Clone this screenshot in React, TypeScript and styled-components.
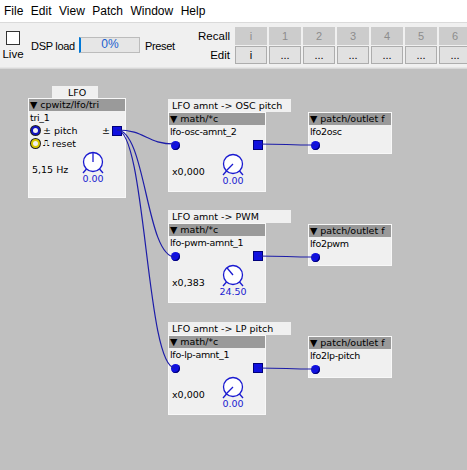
import React from 'react';
import styled, {createGlobalStyle} from 'styled-components';

const GlobalStyle = createGlobalStyle`
  html, body {
    margin: 0;
    padding: 0;
    background: #c0c0c0;
  }
  body {
    font-family: "Liberation Sans", Arial, sans-serif;
    width: 467px;
    height: 470px;
    overflow: hidden;
  }
`;

const menuItems = ['File', 'Edit', 'View', 'Patch', 'Window', 'Help'];
const presets = ['i', '1', '2', '3', '4', '5', '6'];

const Knob = ({angle}: {angle: number}) => {
  const r = 9.5;
  const cx = 11;
  const cy = 11;
  const rad = (angle * Math.PI) / 180;
  const ex = cx + Math.sin(rad) * r;
  const ey = cy - Math.cos(rad) * r;
  return (
    <svg width="22" height="24" viewBox="0 0 22 24">
      <circle cx={cx} cy={cy} r={r} fill="#fff" stroke="#1a1ad0" strokeWidth="1.3"/>
      <line x1={cx} y1={cy} x2={ex} y2={ey} stroke="#1a1ad0" strokeWidth="1.3"/>
      <line x1="4.5" y1="18" x2="1" y2="22" stroke="#1a1ad0" strokeWidth="1.3"/>
      <line x1="17.5" y1="18" x2="21" y2="22" stroke="#1a1ad0" strokeWidth="1.3"/>
    </svg>
  );
};

type MathProps = {top: number; label: string; name: string; factor: string; value: string; angle: number};

const MathBlock = ({top, label, name, factor, value, angle}: MathProps) => (
  <>
    <Comment style={{left: 168, top, width: 123}}>{label}</Comment>
    <Node style={{left: 168, top: top + 13, width: 98, height: 80}}>
      <NodeHeader>▼ math/*c</NodeHeader>
      <NodeName>{name}</NodeName>
      <PortRow>
        <Inlet/>
        <Outlet/>
      </PortRow>
      <ParamRow>
        <ParamText>{factor}</ParamText>
        <KnobWrap>
          <Knob angle={angle}/>
          <KnobValue>{value}</KnobValue>
        </KnobWrap>
      </ParamRow>
    </Node>
  </>
);

const OutletBlock = ({top, name}: {top: number; name: string}) => (
  <Node style={{left: 308, top, width: 84, height: 42}}>
    <NodeHeader>▼ patch/outlet f</NodeHeader>
    <NodeName>{name}</NodeName>
    <PortRow>
      <Inlet/>
    </PortRow>
  </Node>
);

const wire = (x1: number, y1: number, x2: number, y2: number) => {
  const dx = Math.max(20, Math.abs(x2 - x1) * 0.5);
  return `M${x1} ${y1} C${x1 + dx} ${y1} ${x2 - dx} ${y2} ${x2} ${y2}`;
};

const App = () => {
  return (
    <>
      <GlobalStyle/>
      <Window>
        <MenuBar>
          {menuItems.map((m) => (
            <MenuItem key={m}>{m}</MenuItem>
          ))}
        </MenuBar>
        <Toolbar>
          <LiveBox>
            <CheckBox/>
            <span>Live</span>
          </LiveBox>
          <ToolLabel $gap={6}>DSP load</ToolLabel>
          <DspBar>0%</DspBar>
          <ToolLabel $gap={5}>Preset</ToolLabel>
          <PresetGrid>
            <RowLabel>Recall</RowLabel>
            {presets.map((p) => (
              <PresetButton key={'r' + p} disabled>{p}</PresetButton>
            ))}
            <RowLabel>Edit</RowLabel>
            {presets.map((p) => (
              <PresetButton key={'e' + p}>{p === 'i' ? 'i' : '...'}</PresetButton>
            ))}
          </PresetGrid>
        </Toolbar>
        <Canvas>
          <Wires width="467" height="403">
            <path d={wire(117, 61, 175, 75)}/>
            <path d={wire(117, 61, 175, 188)}/>
            <path d={wire(117, 61, 175, 299)}/>
            <path d={wire(258, 75, 315, 76)}/>
            <path d={wire(258, 187, 315, 188)}/>
            <path d={wire(258, 299, 315, 300)}/>
          </Wires>

          <Comment style={{left: 52, top: 17, width: 46, textAlign: 'center'}}>LFO</Comment>
          <Node style={{left: 28, top: 29, width: 98, height: 100}}>
            <NodeHeader>▼ cpwitz/lfo/tri</NodeHeader>
            <NodeName>tri_1</NodeName>
            <LfoRow>
              <LfoInlet $yellow={false}/>
              <span>± pitch</span>
              <LfoOut>± <Outlet/></LfoOut>
            </LfoRow>
            <LfoRow>
              <LfoInlet $yellow/>
              <StepGlyph>⎍</StepGlyph>
              <span>reset</span>
            </LfoRow>
            <ParamRow $right={19}>
              <ParamText>5,15 Hz</ParamText>
              <KnobWrap>
                <Knob angle={0}/>
                <KnobValue>0.00</KnobValue>
              </KnobWrap>
            </ParamRow>
          </Node>

          <MathBlock top={30} label="LFO amnt -> OSC pitch" name="lfo-osc-amnt_2" factor="x0,000" value="0.00" angle={-135}/>
          <MathBlock top={141} label="LFO amnt -> PWM" name="lfo-pwm-amnt_1" factor="x0,383" value="24.50" angle={-40}/>
          <MathBlock top={253} label="LFO amnt -> LP pitch" name="lfo-lp-amnt_1" factor="x0,000" value="0.00" angle={-135}/>

          <OutletBlock top={43} name="lfo2osc"/>
          <OutletBlock top={155} name="lfo2pwm"/>
          <OutletBlock top={267} name="lfo2lp-pitch"/>
        </Canvas>
      </Window>
    </>
  );
};

export default App;

const Window = styled.div`
  width: 467px;
  height: 470px;
  display: flex;
  flex-direction: column;
`;
const MenuBar = styled.div`
  height: 22px;
  background: #fff;
  display: flex;
  align-items: center;
  padding-left: 4px;
  gap: 7.5px;
  font-size: 12px;
  color: #000;
`;
const MenuItem = styled.span`
  line-height: 22px;
`;
const Toolbar = styled.div`
  height: 44px;
  background: #f0f0f0;
  border-top: 1px solid #dadada;
  border-bottom: 1px solid #e6e6e6;
  display: flex;
  align-items: center;
  font-size: 11px;
  color: #000;
  overflow: hidden;
`;
const LiveBox = styled.div`
  display: flex;
  flex-direction: column;
  align-items: center;
  width: 24px;
  margin-left: 1px;
  gap: 3px;
  flex-shrink: 0;
  font-size: 11.5px;
`;
const CheckBox = styled.div`
  width: 12px;
  height: 12px;
  border: 1px solid #333;
  background: #fff;
`;
const ToolLabel = styled.span<{$gap: number}>`
  margin-left: ${p => p.$gap}px;
  padding-top: 2px;
  font-size: 11px;
  letter-spacing: -0.3px;
  white-space: nowrap;
  flex-shrink: 0;
`;
const DspBar = styled.div`
  margin-left: 4px;
  width: 58px;
  height: 14px;
  flex-shrink: 0;
  background: #e6e6e6;
  border: 1px solid #bcbcbc;
  border-left: 2px solid #0078d7;
  color: #1a5fd0;
  font-size: 12px;
  line-height: 12px;
  text-align: center;
`;
const PresetGrid = styled.div`
  margin-left: auto;
  margin-right: -4px;
  flex-shrink: 0;
  display: grid;
  grid-template-columns: 58px repeat(7, 32px);
  grid-template-rows: 18px 18px;
  column-gap: 2px;
  row-gap: 1px;
  font-size: 11.5px;
`;
const RowLabel = styled.span`
  text-align: right;
  padding-right: 3px;
  line-height: 18px;
`;
const PresetButton = styled.div<{disabled?: boolean}>`
  box-sizing: border-box;
  border: 1px solid ${p => (p.disabled ? '#cccccc' : '#adadad')};
  background: ${p => (p.disabled ? '#cccccc' : '#e1e1e1')};
  color: ${p => (p.disabled ? '#8c8c8c' : '#000')};
  font-size: 11px;
  text-align: center;
  line-height: 16px;
`;
const Canvas = styled.div`
  position: relative;
  flex: 1;
  background: #c0c0c0;
  border-top: 1px solid #d8d8d8;
`;
const Wires = styled.svg`
  position: absolute;
  left: 0;
  top: 0;
  pointer-events: none;
  z-index: 2;
  path {
    fill: none;
    stroke: #1c1ca8;
    stroke-width: 1.2;
  }
`;
const Comment = styled.div`
  position: absolute;
  box-sizing: border-box;
  height: 13px;
  background: #f0f0f0;
  font-family: "DejaVu Sans", Verdana, sans-serif;
  font-size: 9.5px;
  line-height: 13px;
  padding-left: 4px;
  color: #000;
  white-space: nowrap;
`;
const Node = styled.div`
  position: absolute;
  box-sizing: border-box;
  background: #f0f0f0;
  border: 1px solid #f8f8f8;
  display: flex;
  flex-direction: column;
  font-family: "DejaVu Sans", Verdana, sans-serif;
  font-size: 9.5px;
  color: #000;
`;
const NodeHeader = styled.div`
  height: 12px;
  line-height: 12px;
  background: #9a9a9a;
  padding-left: 1px;
  white-space: nowrap;
  overflow: hidden;
`;
const NodeName = styled.div`
  height: 13px;
  line-height: 14px;
  padding-left: 1px;
  white-space: nowrap;
  letter-spacing: -0.3px;
`;
const PortRow = styled.div`
  height: 14px;
  display: flex;
  align-items: center;
  justify-content: space-between;
  padding: 0 2px 0 2px;
`;
const Inlet = styled.div`
  width: 9px;
  height: 9px;
  border-radius: 50%;
  background: #1010e0;
  box-shadow: inset -1px -1px 0 #00007a;
`;
const Outlet = styled.div`
  display: inline-block;
  width: 8px;
  height: 8px;
  background: #1010e0;
  border: 1px solid #00007a;
`;
const ParamRow = styled.div<{$right?: number}>`
  display: flex;
  align-items: center;
  justify-content: space-between;
  padding: 1px ${p => p.$right ?? 19}px 0 3px;
`;
const ParamText = styled.span`
  padding-top: 3px;
`;
const KnobWrap = styled.div`
  display: flex;
  flex-direction: column;
  align-items: center;
  width: 26px;
`;
const KnobValue = styled.span`
  color: #1a1ad0;
  margin-top: -2px;
`;
const LfoRow = styled.div`
  height: 13px;
  display: flex;
  align-items: center;
  gap: 3px;
  padding-left: 2px;
`;
const LfoInlet = styled.div<{$yellow: boolean}>`
  box-sizing: border-box;
  width: 9px;
  height: 9px;
  border-radius: 50%;
  border: 2px solid ${p => (p.$yellow ? '#d8c800' : '#1010c0')};
  background: #f0f0f0;
  box-shadow: 0 0 0 1px #222;
`;
const LfoOut = styled.span`
  margin-left: auto;
  display: flex;
  align-items: center;
  gap: 2px;
  margin-right: 3px;
`;
const StepGlyph = styled.span`
  font-size: 9px;
`;
